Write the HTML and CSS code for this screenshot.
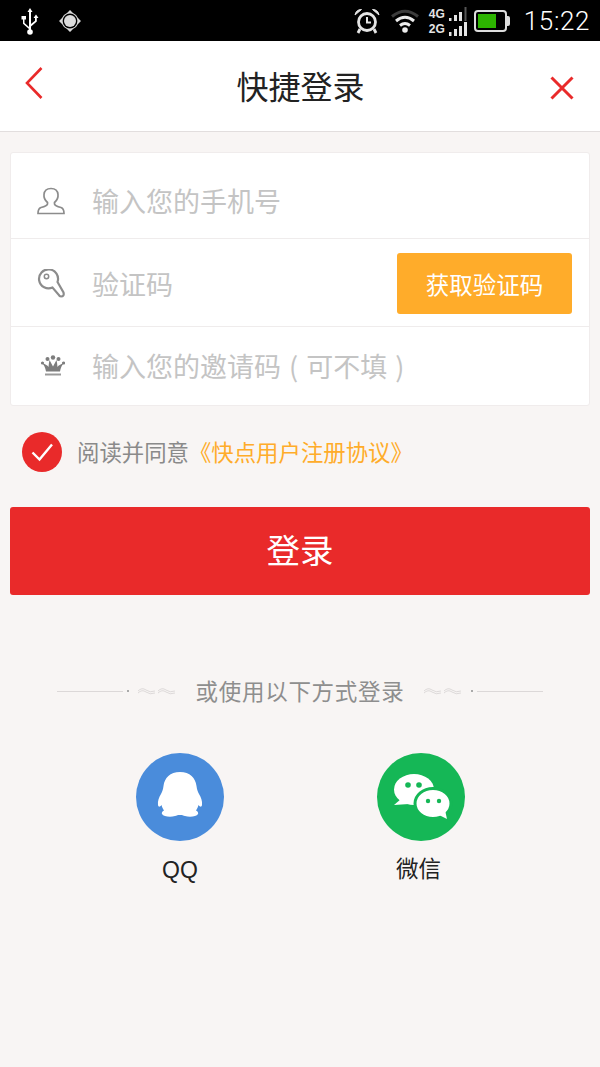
FILE: index.html
```html
<!DOCTYPE html>
<html lang="zh-CN">
  <head>
    <meta charset="utf-8" />
    <title>快捷登录</title>
    <link rel="stylesheet" href="styles.css">
  </head>

  <body>
    <!-- status bar -->
    <div class="status">
      <svg class="status__icon status__usb" viewBox="0 0 20 28" width="20" height="28">
        <path d="M10 1 L7.5 5 H9 V20 L4.5 16 V12.5 H6 V9 H1.5 V12.5 H3 V16.8 L9 22 V24 H11 V19.5 L16.8 14.5 V11 H18.5 L16 7.5 L13.5 11 H15 V13.8 L11 17 V5 H12.5 Z" fill="#fff"/>
        <circle cx="10" cy="25" r="2.8" fill="#fff"/>
      </svg>
      <svg class="status__icon status__gps" viewBox="0 0 22 22" width="22" height="22">
        <path d="M11 0 L14 3 A9 9 0 0 1 19 8 L22 11 L19 14 A9 9 0 0 1 14 19 L11 22 L8 19 A9 9 0 0 1 3 14 L0 11 L3 8 A9 9 0 0 1 8 3 Z" fill="#d8d8d8"/>
        <circle cx="11" cy="11" r="7.4" fill="#000"/>
        <circle cx="11" cy="11" r="6" fill="#dcdcdc"/>
      </svg>
      <span class="status__spacer"></span>
      <svg class="status__icon status__alarm" viewBox="0 0 26 26" width="26" height="26">
        <circle cx="13" cy="14" r="8.500" fill="none" stroke="#e4e4e4" stroke-width="2.800"/>
        <path d="M13 9 V14.500 H17" fill="none" stroke="#e4e4e4" stroke-width="2"/>
        <path d="M1 7 Q2 1.5 7.5 1.5 Z M25 7 Q24 1.5 18.5 1.5 Z" fill="#e4e4e4" stroke="#e4e4e4"/>
        <path d="M6 21 L4 25 M20 21 L22 25" stroke="#e4e4e4" stroke-width="2.800"/>
      </svg>
      <svg class="status__icon status__wifi" viewBox="0 0 30 24" width="30" height="24">
        <path d="M2 7.5 Q15 -3 28 7.5" fill="none" stroke="#3c3c3c" stroke-width="3"/>
        <path d="M6 12 Q15 4.5 24 12" fill="none" stroke="#ececec" stroke-width="3"/>
        <path d="M10 16.5 Q15 12.5 20 16.5" fill="none" stroke="#ececec" stroke-width="3"/>
        <circle cx="15" cy="21" r="2.8" fill="#ececec"/>
      </svg>
      <div class="signal">
        <div class="signal__row">
          <span class="signal__label">4G</span>
          <svg viewBox="0 0 18 14" width="18" height="14">
            <path d="M0 11h2.500v3h-2.500z M5 8h3v6h-3z M10 5h3v9h-3z" fill="#e4e4e4"/>
            <path d="M15.500 0h2v14h-2z" fill="#555"/>
          </svg>
        </div>
        <div class="signal__row">
          <span class="signal__label">2G</span>
          <svg viewBox="0 0 18 14" width="18" height="14">
            <path d="M0 10h2.500v4h-2.500z M5 7h3v7h-3z M10 4h3v10h-3z M15 0h3v14h-3z" fill="#e4e4e4"/>
          </svg>
        </div>
      </div>
      <div class="battery">
        <div class="battery__level"></div>
      </div>
      <span class="battery__cap"></span>
      <span class="status__time">15:22</span>
    </div>

    <!-- title bar -->
    <header class="header">
      <svg class="header__back" viewBox="0 0 20 34" width="20" height="34">
        <path d="M17.5 2 L3 17 L17.5 32" fill="none" stroke="#e92a2a" stroke-width="2.6"/>
      </svg>
      <h1 class="header__title">快捷登录</h1>
      <svg class="header__close" viewBox="0 0 24 24" width="24" height="24">
        <path d="M1.5 1.5 L22.5 22.5 M22.5 1.5 L1.5 22.5" fill="none" stroke="#e92a2a" stroke-width="3"/>
      </svg>
    </header>

    <section class="form">
      <div class="form__row form__row--phone">
        <svg class="form__icon" viewBox="0 0 28 28" width="28" height="28">
          <path d="M10.5 17 V15.5 Q6.5 12 7 7.5 Q7.5 1.5 14 1.5 Q20.5 1.5 21 7.5 Q21.5 12 17.5 15.5 V17 Q18 19 24 20.5 Q27 21.5 27 26.5 H1 Q1 21.5 4 20.5 Q10 19 10.5 17 Z" fill="none" stroke="#8c8c8c" stroke-width="1.7"/>
        </svg>
        <span class="form__placeholder">输入您的手机号</span>
      </div>
      <div class="form__row form__row--code">
        <svg class="form__icon" viewBox="0 0 28 30" width="28" height="30">
          <path d="M15.500 18.500 A9.500 9.500 0 1 1 20.500 13 L26.500 23.500 Q27.500 27.500 24 27.500 Q22.500 27.500 21.500 25.500 Z" fill="none" stroke="#8c8c8c" stroke-width="2.200"/>
          <circle cx="9.500" cy="7.500" r="2.200" fill="none" stroke="#8c8c8c" stroke-width="1.500"/>
        </svg>
        <span class="form__placeholder">验证码</span>
        <button class="form__send">获取验证码</button>
      </div>
      <div class="form__row form__row--invite">
        <svg class="form__icon" viewBox="-4 -1 28 24" width="28" height="24">
          <path d="M5 17.500 Q4 12 1.500 9.500 Q6 10.500 7.500 13 Q8 8 8.500 6 L12 12.500 L15.500 6 Q16 8 16.500 13 Q18 10.500 22.500 9.500 Q20 12 19 17.500 Z" fill="#7d7d7d"/>
          <circle cx="12" cy="3.500" r="2.200" fill="#7d7d7d"/>
          <circle cx="6.500" cy="5" r="2" fill="#7d7d7d"/>
          <circle cx="17.500" cy="5" r="2" fill="#7d7d7d"/>
          <circle cx="1.500" cy="9" r="1.600" fill="#7d7d7d"/>
          <circle cx="22.500" cy="9" r="1.600" fill="#7d7d7d"/>
          <path d="M4 19.500 H20 V21.500 H4 Z" fill="#9a9a9a"/>
        </svg>
        <span class="form__placeholder form__placeholder--invite">输入您的邀请码 ( 可不填 )</span>
      </div>
    </section>

    <div class="agree">
      <svg class="agree__check" viewBox="0 0 40 40" width="40" height="40">
        <circle cx="20" cy="20" r="20" fill="#e92a2a"/>
        <path d="M10.500 20.500 L17.500 27.500 L30 12.500" fill="none" stroke="#fff" stroke-width="2.400"/>
      </svg>
      <span class="agree__text">阅读并同意</span><span class="agree__link">《快点用户注册协议》</span>
    </div>

    <button class="login">登录</button>

    <div class="divider">
      <span class="divider__line"></span>
      <span class="divider__dot"></span>
      <svg class="divider__wave" viewBox="0 0 40 8" width="40" height="8">
        <path d="M1 4 Q5 0 9 3 T18 4 M1 6 Q5 2 9 5 T18 6 M21 4 Q25 0 29 3 T38 4 M21 6 Q25 2 29 5 T38 6" fill="none" stroke="#d6d2d2" stroke-width="0.800"/>
      </svg>
      <span class="divider__text">或使用以下方式登录</span>
      <svg class="divider__wave" viewBox="0 0 40 8" width="40" height="8">
        <path d="M1 4 Q5 0 9 3 T18 4 M1 6 Q5 2 9 5 T18 6 M21 4 Q25 0 29 3 T38 4 M21 6 Q25 2 29 5 T38 6" fill="none" stroke="#d6d2d2" stroke-width="0.800"/>
      </svg>
      <span class="divider__dot"></span>
      <span class="divider__line"></span>
    </div>

    <div class="social">
      <div class="social__item">
        <svg class="social__icon" viewBox="0 0 88 88" width="88" height="88">
          <circle cx="44" cy="44" r="44" fill="#4a8cdb"/>
          <path d="M44 19 C54 19 59.500 25 60.500 33 C61 37 62 39 63 41 C65 44 66.500 48 66 52 C65.500 54.500 64 54 62.500 52 C62 54 61 56 60 57.500 C62 58.500 62.500 60 62 61 C60.500 63.500 54 64.500 49 63 C47.500 62.500 46 62 44 62 C42 62 40.500 62.500 39 63 C34 64.500 27.500 63.500 26 61 C25.500 60 26 58.500 28 57.500 C27 56 26 54 25.500 52 C24 54 22.500 54.500 22 52 C21.500 48 23 44 25 41 C26 39 27 37 27.500 33 C28.500 25 34 19 44 19 Z" fill="#fff"/>
        </svg>
        <span class="social__label social__label--qq">QQ</span>
      </div>
      <div class="social__item">
        <svg class="social__icon" viewBox="0 0 88 88" width="88" height="88">
          <circle cx="44" cy="44" r="44" fill="#15b756"/>
          <ellipse cx="37" cy="36.500" rx="20" ry="15.500" fill="#fff"/>
          <path d="M24 46 L17 52 L32 51 Z" fill="#fff"/>
          <circle cx="31" cy="32" r="2.800" fill="#15b756"/>
          <circle cx="42" cy="32" r="2.800" fill="#15b756"/>
          <ellipse cx="56" cy="50.500" rx="18" ry="15" fill="#fff" stroke="#15b756" stroke-width="3"/>
          <path d="M62 62 L70 66 L68 57 Z" fill="#fff"/>
          <circle cx="51" cy="48" r="2.200" fill="#15b756"/>
          <circle cx="62" cy="48" r="2.200" fill="#15b756"/>
        </svg>
        <span class="social__label">微信</span>
      </div>
    </div>
  </body>
</html>
```

FILE: styles.css
```css
body {
  background: #f8f5f4;
  color: #222;
  font-family: "Noto Sans CJK SC", "Liberation Sans", sans-serif;
  margin: 0;
}

button {
  border: 0;
  font-family: inherit;
  padding: 0;
}

.status {
  align-items: center;
  background: #000;
  display: flex;
  height: 41px;
  padding: 0 10px 0 20px;
}

.status__icon {
  display: block;
  flex: none;
}

.status__usb {
  margin-right: 19px;
}

.status__spacer {
  flex: 1;
}

.status__alarm {
  margin-right: 10px;
}

.status__wifi {
  margin-right: 9px;
}

.status__time {
  color: #fff;
  font-family: Roboto, sans-serif;
  font-size: 26px;
  font-weight: 300;
  letter-spacing: 0.6px;
  margin-left: 14px;
}

.signal {
  display: flex;
  flex-direction: column;
  margin-right: 7px;
  width: 38px;
}

.signal__row {
  align-items: flex-end;
  display: flex;
  height: 15px;
  justify-content: space-between;
}

.signal__label {
  color: #e4e4e4;
  font-family: "Liberation Sans", sans-serif;
  font-size: 12px;
  font-weight: bold;
  line-height: 13px;
}

.signal__row svg {
  flex: none;
}

.battery {
  border: 2px solid #ddd;
  border-radius: 4px;
  box-sizing: border-box;
  height: 22px;
  padding: 2px;
  width: 33px;
}

.battery__level {
  background: #2db400;
  height: 100%;
  width: 74%;
}

.battery__cap {
  background: #ddd;
  border-radius: 0 2px 2px 0;
  height: 10px;
  width: 3px;
}

.header {
  align-items: center;
  background: #fff;
  border-bottom: 1px solid #e2dede;
  display: flex;
  height: 90px;
  justify-content: space-between;
  padding: 0 26px 0 24px;
}

.header__back {
  margin-top: -6px;
}

.header__title {
  font-size: 32px;
  font-weight: 400;
  line-height: 1;
  margin: -3px 0 0 7px;
}

.header__close {
  margin-top: 4px;
}

.form {
  background: #fff;
  border: 1px solid #f0ecec;
  border-radius: 3px;
  margin: 20px 10px 0;
}

.form__row {
  align-items: center;
  box-sizing: border-box;
  display: flex;
  padding: 0 17px 0 26px;
}

.form__row--phone {
  border-bottom: 1px solid #efecec;
  height: 86px;
  padding-top: 10px;
}

.form__row--code {
  border-bottom: 1px solid #efecec;
  height: 88px;
  padding-top: 2px;
}

.form__row--invite {
  height: 78px;
  padding-bottom: 2px;
}

.form__icon {
  flex: none;
  margin-right: 27px;
}

.form__placeholder {
  color: #c4c4c4;
  flex: 1;
  font-size: 27px;
}

.form__placeholder--invite {
  word-spacing: 2px;
}

.form__send {
  background: #ffac2a;
  border-radius: 3px;
  color: #fff;
  font-size: 23.5px;
  height: 61px;
  width: 175px;
}

.agree {
  align-items: center;
  display: flex;
  font-size: 22.4px;
  margin: 26px 0 0 22px;
}

.agree__check {
  margin-right: 15px;
}

.agree__text {
  color: #8a8a8a;
  padding-bottom: 2px;
}

.agree__link {
  color: #ffac2a;
  padding-bottom: 2px;
}

.login {
  background: #e92a2a;
  border-radius: 3px;
  color: #fff;
  display: block;
  font-size: 33.5px;
  height: 88px;
  margin: 35px 10px 0;
  padding-bottom: 6px;
  width: 580px;
}

.divider {
  align-items: center;
  display: flex;
  height: 30px;
  margin-top: 81px;
  padding: 0 57px;
}

.divider__line {
  background: #dcd8d8;
  flex: none;
  height: 1px;
  width: 66px;
}

.divider__dot {
  background: #aaa;
  flex: none;
  height: 2px;
  margin: 0 8px 0 4px;
  width: 2px;
}

.divider .divider__wave + .divider__dot {
  margin: 0 4px 0 8px;
}

.divider__wave {
  flex: none;
}

.divider__text {
  color: #8e8e8e;
  flex: 1;
  font-size: 22.5px;
  letter-spacing: 0.7px;
  padding-bottom: 2px;
  text-align: center;
  white-space: nowrap;
}

.social {
  display: flex;
  gap: 153px;
  margin-top: 47px;
  padding-left: 136px;
}

.social__item {
  align-items: center;
  display: flex;
  flex-direction: column;
  width: 88px;
}

.social__icon {
  display: block;
}

.social__label {
  font-size: 22.5px;
  line-height: 32px;
  margin-top: 10px;
  white-space: nowrap;
}

.social__label--qq {
  font-family: "Liberation Sans", sans-serif;
  font-size: 23px;
  margin-top: 13px;
}

.social__item + .social__item .social__label {
  margin-right: 5px;
}
```
